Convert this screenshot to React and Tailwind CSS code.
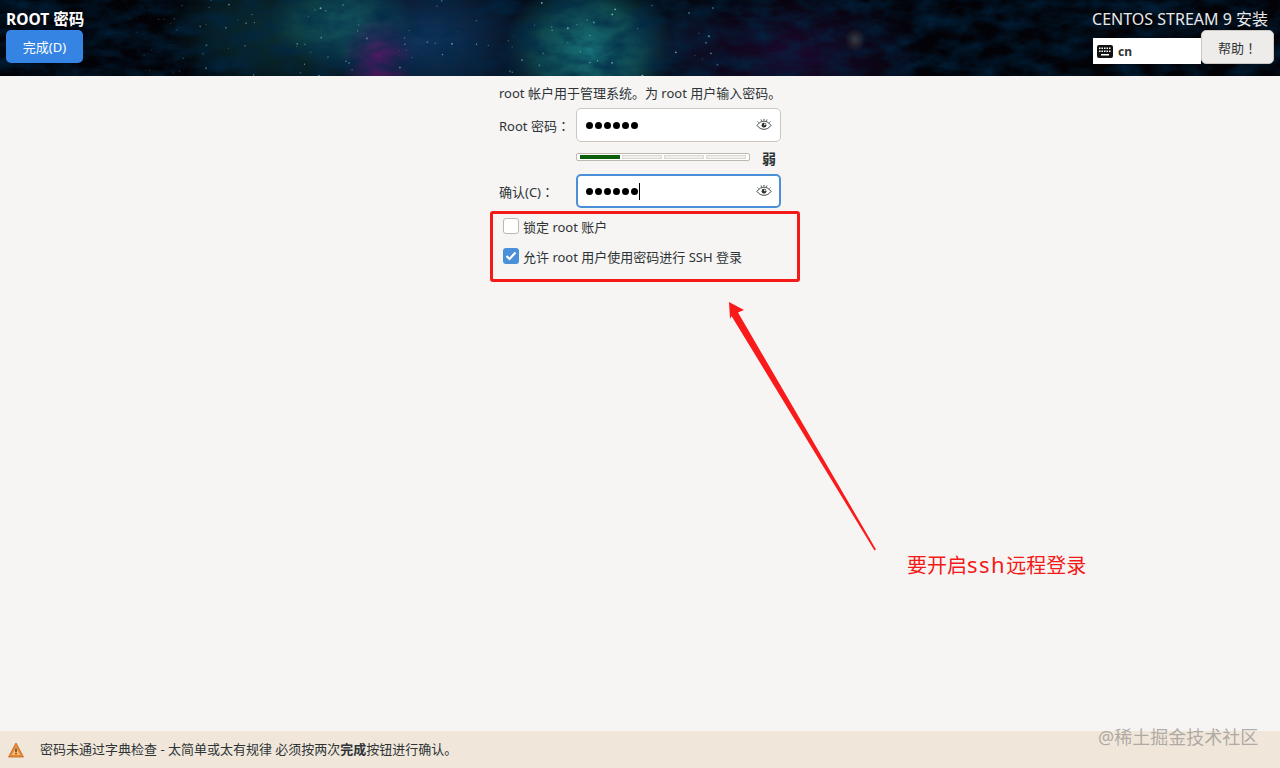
import { Fragment } from 'react'

const FONT = 'font-["Noto_Sans","Noto_Sans_CJK_SC",sans-serif]'
// the TC face centres full-width punctuation, as the installer does
const PUNCT = 'font-["Noto_Sans_CJK_TC",sans-serif]'

// stars scattered over the nebula, seeded so the picture stays the same
function makeStars(count) {
  let seed = 17
  const next = () => {
    seed = (seed * 16807) % 2147483647
    return seed / 2147483647
  }
  const stars = []
  for (let i = 0; i < count; i++) {
    const x = 130 + Math.pow(next(), 1.300) * 590
    stars.push({ x, y: next() * 76, r: 0.5 + next() * 0.5, o: (0.25 + next() * 0.5) * Math.min(1, (x - 110) / 160) })
  }
  return stars
}

function Nebula() {
  return (
    <svg className="absolute inset-0 h-full w-full" viewBox="0 0 1280 76" preserveAspectRatio="none">
      <defs>
        <radialGradient id="teal">
          <stop offset="0%" stopColor="#17737a" stopOpacity="1" />
          <stop offset="60%" stopColor="#14646a" stopOpacity="0.7" />
          <stop offset="100%" stopColor="#14646a" stopOpacity="0" />
        </radialGradient>
        <radialGradient id="blue">
          <stop offset="0%" stopColor="#123a66" stopOpacity="0.95" />
          <stop offset="100%" stopColor="#123a66" stopOpacity="0" />
        </radialGradient>
        <radialGradient id="magenta">
          <stop offset="0%" stopColor="#5a1668" stopOpacity="0.95" />
          <stop offset="100%" stopColor="#5a1668" stopOpacity="0" />
        </radialGradient>
        <radialGradient id="violet">
          <stop offset="0%" stopColor="#1c0a30" stopOpacity="0.95" />
          <stop offset="100%" stopColor="#1c0a30" stopOpacity="0" />
        </radialGradient>
        <radialGradient id="glow">
          <stop offset="0%" stopColor="#55554e" stopOpacity="0.6" />
          <stop offset="100%" stopColor="#55554e" stopOpacity="0" />
        </radialGradient>
        <filter id="grain" x="0" y="0" width="100%" height="100%">
          <feTurbulence type="fractalNoise" baseFrequency="0.035 0.07" numOctaves="4" seed="8" />
          <feColorMatrix values="0 0 0 0 0  0 0 0 0 0.02  0 0 0 0 0.06  1.400 0 0 0 -0.450" />
        </filter>
      </defs>
      <ellipse cx="290" cy="30" rx="130" ry="70" fill="url(#teal)" opacity="0.4" />
      <ellipse cx="430" cy="40" rx="130" ry="90" fill="url(#blue)" />
      <ellipse cx="340" cy="20" rx="70" ry="50" fill="url(#teal)" opacity="0.55" />
      <ellipse cx="378" cy="62" rx="36" ry="46" fill="url(#magenta)" />
      <ellipse cx="590" cy="50" rx="85" ry="75" fill="url(#teal)" />
      <ellipse cx="680" cy="40" rx="60" ry="60" fill="url(#blue)" opacity="0.4" />
      <ellipse cx="790" cy="55" rx="140" ry="70" fill="url(#violet)" />
      <rect width="1280" height="76" filter="url(#grain)" />
      <ellipse cx="855" cy="40" rx="10" ry="12" fill="url(#glow)" />
      {makeStars(120).map((s, i) => (
        <circle key={i} cx={s.x} cy={s.y} r={s.r} fill="#a5e0e0" opacity={s.o} />
      ))}
    </svg>
  )
}

function EyeIcon() {
  return (
    <svg width="16" height="14" viewBox="0 0 16 14" fill="none" stroke="#2e3436" strokeWidth="0.900">
      <path d="M1 7.500C3 4.500 5.400 3.200 8 3.200s5 1.300 7 4.300c-2 2.600-4.400 3.800-7 3.800S3 10.100 1 7.500Z" />
      <circle cx="8" cy="7.200" r="2.400" fill="#2e3436" stroke="none" />
      <circle cx="8.800" cy="6.400" r="0.800" fill="#fff" stroke="none" />
      <path d="M2.500 4.500 1.500 3.500M13.500 4.500l1-1M5.500 2.800 5 1.500M10.500 2.800l.5-1.300M8 2.500V1" />
    </svg>
  )
}

function KeyboardIcon() {
  return (
    <svg width="16" height="13" viewBox="0 0 16 13">
      <rect width="16" height="13" rx="2" fill="#111" />
      {[2.500, 5, 7.500, 10, 12.500].map((x) => (
        <Fragment key={x}>
          <rect x={x - 0.500} y="2.500" width="1.500" height="1.500" fill="#fff" />
          <rect x={x - 0.500} y="5.500" width="1.500" height="1.500" fill="#fff" />
        </Fragment>
      ))}
      <rect x="4" y="9" width="8" height="1.500" fill="#fff" />
    </svg>
  )
}

function Dots({ caret }) {
  return (
    <div className="flex items-center gap-[2px]">
      {[0, 1, 2, 3, 4, 5].map((i) => (
        <span key={i} className="h-[7px] w-[7px] rounded-full bg-black" />
      ))}
      {caret && <span className="-ml-[1px] h-[17px] w-px bg-black" />}
    </div>
  )
}

function PasswordRow({ label, focused, caret }) {
  return (
    <div className="flex items-center">
      <span className="w-[77px] pt-[2px] text-[13px] whitespace-nowrap text-[#2e3436]">
        {label}
        <span className={PUNCT}>：</span>
      </span>
      <div
        className={`flex h-[34px] w-[205px] items-center justify-between rounded-[5px] bg-white ${
          focused ? 'border-2 border-[#4a90d9] pr-[7px] pl-[8px]' : 'border border-[#cdc7c2] pr-[8px] pl-[9px]'
        }`}
      >
        <Dots caret={caret} />
        <EyeIcon />
      </div>
    </div>
  )
}

function Strength() {
  return (
    <div className="mt-[7px] mb-[9px] ml-[77px] flex h-[16px] items-center">
      <div className="flex h-[8px] w-[174px] gap-[2px] rounded-[2px] border border-[#bfb8b1] bg-white p-px px-[3px]">
        <div className="w-[40px] bg-[#0b5f0b]" />
        <div className="flex-1 border border-[#ddd8d3] bg-[#f1efec]" />
        <div className="flex-1 border border-[#ddd8d3] bg-[#f1efec]" />
        <div className="flex-1 border border-[#ddd8d3] bg-[#f1efec]" />
      </div>
      <span className="mt-[3px] ml-[12px] text-[14px] font-bold text-[#2e3436]">弱</span>
    </div>
  )
}

function CheckRow({ checked, children }) {
  return (
    <div className="flex h-[16px] items-center gap-[4px]">
      {checked ? (
        <span className="flex h-[16px] w-[16px] items-center justify-center rounded-[3px] bg-[#4a90d9]">
          <svg width="12" height="10" viewBox="0 0 12 10" fill="none" stroke="#fff" strokeWidth="2.200">
            <path d="M1.500 5 4.500 8 10.500 1.500" />
          </svg>
        </span>
      ) : (
        <span className="h-[16px] w-[16px] rounded-[3px] border border-[#bdb7b1] bg-white" />
      )}
      <span className="pt-[3px] text-[13px] text-[#2e3436]">{children}</span>
    </div>
  )
}

export default function App() {
  return (
    <div className={`relative flex h-[768px] w-[1280px] flex-col overflow-hidden bg-[#f6f5f3] ${FONT}`}>
      {/* Top bar */}
      <header className="relative flex h-[76px] shrink-0 justify-between bg-[#020207] text-white">
        <Nebula />
        <div className="relative pl-[6px] pt-[9px]">
          <h1 className="text-[15.500px] leading-[21px] font-bold">ROOT 密码</h1>
          <button className="flex h-[33px] w-[77px] items-center justify-center rounded-[5px] bg-[#3584e4] pt-[2px] text-[13px] text-white">
            完成(D)
          </button>
        </div>
        <div className="relative flex flex-col items-end pr-[6px] pt-[8px]">
          <div className="pr-[6px] text-[16px] leading-[22px] text-[#e8e8e8]">CENTOS STREAM 9 安装</div>
          <div className="flex items-end">
            <div className="flex h-[26px] w-[108px] items-center gap-[5px] bg-white pl-[4px] text-[12px] font-bold text-[#2e3436]">
              <KeyboardIcon />
              <span className="pt-[1px]">cn</span>
            </div>
            <button className="h-[34px] w-[73px] rounded-[5px] border border-[#cdc7c2] bg-[#eeecea] pt-[2px] text-[13px] text-[#2e3436]">
              帮助<span className={PUNCT}>！</span>
            </button>
          </div>
        </div>
      </header>

      {/* Password form */}
      <main className="flex flex-1 justify-center">
        <div className="w-[282px] pt-[8px]">
          <p className="mb-[5px] h-[19px] text-[13px] leading-[19px] whitespace-nowrap text-[#2e3436]">
            root 帐户用于管理系统。为 root 用户输入密码。
          </p>
          <PasswordRow label="Root 密码" />
          <Strength />
          <PasswordRow label="确认(C)" focused caret />
          <div className="mt-[10px] ml-[4px] flex flex-col gap-[14px]">
            <CheckRow>锁定 root 账户</CheckRow>
            <CheckRow checked>允许 root 用户使用密码进行 SSH 登录</CheckRow>
          </div>
        </div>
      </main>

      {/* Warning bar */}
      <footer className="flex h-[37px] shrink-0 items-center bg-[#f0e6da] pl-[8px] text-[13px] text-[#2e3436]">
        <svg width="16" height="16" viewBox="0 0 16 16">
          <path d="M8 1 15.500 15H.5Z" fill="#ea8a35" stroke="#c06a20" strokeWidth="0.800" strokeLinejoin="round" />
          <path d="M8 5 12 13H4Z" fill="#f6c07a" />
          <rect x="7.300" y="6.500" width="1.400" height="3.800" fill="#5a3415" />
          <rect x="7.300" y="11" width="1.400" height="1.400" fill="#5a3415" />
        </svg>
        <span className="ml-[16px]">
          密码未通过字典检查 - 太简单或太有规律 必须按两次<b>完成</b>按钮进行确认。
        </span>
      </footer>

      {/* Annotations drawn over the screenshot */}
      <div className="absolute top-[211px] left-[490px] h-[71px] w-[310px] rounded-[3px] border-[3px] border-[#f41a17]" />
      <svg className="absolute top-[295px] left-[720px]" width="165" height="265" viewBox="720 295 165 265">
        <path d="M729 302 744 310 738 312.500 876 549.500 874.500 550.500 731.500 316 730 319Z" fill="#fa1a1a" />
      </svg>
      <div className="absolute top-[551px] left-[907px] text-[20px] leading-[27px] text-[#f41a17]">
        要开启<span className="text-[22px] tracking-[1.500px]">ssh</span>远程登录
      </div>
      <div className="absolute top-[725px] left-[1098px] text-[18px] leading-[24px] text-[#9d9a96]/80">@稀土掘金技术社区</div>
    </div>
  )
}
